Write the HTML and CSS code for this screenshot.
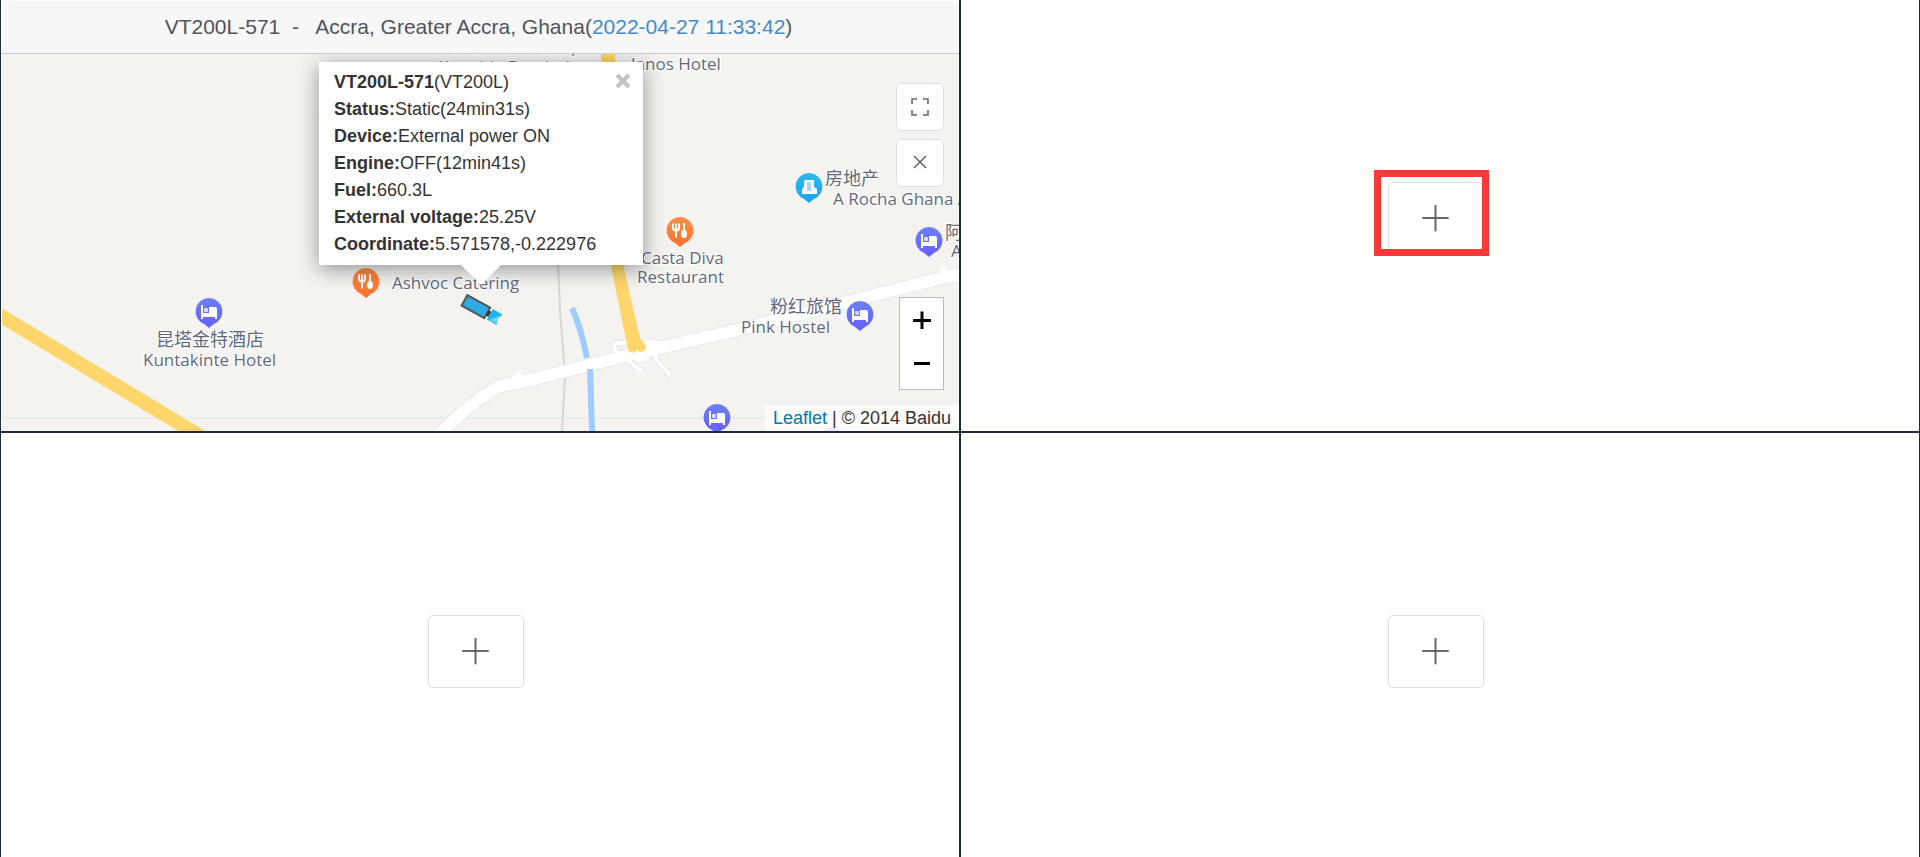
FILE: index.html
```html
<!DOCTYPE html>
<html lang="en">
<head>
    <meta charset="utf-8">
    <title>Multi Tracking</title>
    <link rel="stylesheet" href="styles.css">
</head>
<body>
    <div class="monitor-grid">
        <section class="cell cell-track">
            <header class="track-header">VT200L-571&nbsp; -&nbsp;&nbsp; Accra, Greater Accra, Ghana(<span class="time">2022-04-27 11:33:42</span>)</header>
            <div class="map">
                <svg class="map-tiles" viewBox="2 54 957 377" preserveAspectRatio="xMinYMin slice">
                    <defs>
                        <linearGradient id="hotelFill" x1="0" y1="0" x2="0" y2="1">
                            <stop offset="0" stop-color="#6c7ff8"/>
                            <stop offset="1" stop-color="#665ffa"/>
                        </linearGradient>
                        <linearGradient id="foodFill" x1="0" y1="0" x2="0" y2="1">
                            <stop offset="0" stop-color="#fb8d45"/>
                            <stop offset="1" stop-color="#fd6f2f"/>
                        </linearGradient>
                        <linearGradient id="estateFill" x1="0" y1="0" x2="0" y2="1">
                            <stop offset="0" stop-color="#2fb8e8"/>
                            <stop offset="1" stop-color="#16a6f5"/>
                        </linearGradient>
                        <path id="pin" d="M0-14a13.5 13.5 0 0 1 4.500 26.200L0 16L-4.500 12.200A13.500 13.500 0 0 1 0-14z"/>
                        <g id="hotel">
                            <use href="#pin" fill="url(#hotelFill)"/>
                            <path d="M-8-7h2v8h12v-2h2v8h-2v-2h-12v2h-2zM0-5h6q2 0 2 2v5h-8z" fill="#fff"/>
                            <rect x="-5" y="-4" width="4" height="4" rx="1" fill="#d8dcff"/>
                        </g>
                        <g id="food">
                            <use href="#pin" fill="url(#foodFill)"/>
                            <path d="M-7-7.500v4.500q0 2.500 3 2.500t3-2.500v-4.500M-4-7.500v14" fill="none" stroke="#fff" stroke-width="2"/>
                            <path d="M4-8v9" stroke="#fff" stroke-width="2"/>
                            <ellipse cx="4" cy="3" rx="3" ry="4" fill="#fff"/>
                        </g>
                        <g id="estate">
                            <use href="#pin" fill="url(#estateFill)"/>
                            <path d="M-5-6l2-1h8v7l3 2v5h-15v-5l2-2z" fill="#fff"/>
                            <path d="M-2-5h4v9h-4z" fill="#a5d6ff"/>
                        </g>
                    </defs>

                    <path d="M2 418H959" stroke="#ecebe9" stroke-width="2"/>
                    <path d="M557 240L560 310L565 375L562 431" fill="none" stroke="#d6d6d6" stroke-width="2"/>

                    <!-- roads -->
                    <g fill="none" stroke-linejoin="round" stroke-linecap="round">
                        <path d="M438 436Q465 408 484 396Q498 384 518 383L625 356L750 327L860 299L945 277L965 274" stroke="#e9e9e9" stroke-width="14"/>
                        <g stroke="#e9e9e9" stroke-width="6">
                            <path d="M618 354Q610 344 617 343H642"/>
                            <path d="M626 359L641 371M656 350V359L669 374M635 359Q642 364 650 353"/>
                        </g>
                        <path d="M438 436Q465 408 484 396Q498 384 518 383L625 356L750 327L860 299L945 277L965 274" stroke="#fff" stroke-width="12"/>
                        <g stroke="#fff" stroke-width="4">
                            <path d="M618 354Q610 344 617 343H660"/>
                            <path d="M626 359L641 371M656 350V359L669 374M635 359Q642 364 650 353"/>
                        </g>
                        <path d="M514 378l4-4l4 4M938 277l6-9l4 6" stroke="#fff" stroke-width="4"/>
                    </g>
                    <path d="M572 308Q581 328 587 358" fill="none" stroke="#9fccff" stroke-width="6"/>
                    <path d="M590 369L592 431" stroke="#9fccff" stroke-width="6"/>
                    <path d="M601 54H615L622 260L640 338L645 344A5 5 0 0 1 637 350A5 5 0 0 1 628 350L611 266z" fill="#ffd66b"/>
                    <path d="M-4 313L200 436" stroke="#ffd66b" stroke-width="14"/>

                    <!-- places -->
                    <g class="place">
                        <text x="452" y="54">Mercourt Plaza,</text>
                        <text x="438" y="73">Kwashie Bomboh</text>
                        <text x="631" y="70">Janos Hotel</text>
                        <text x="392" y="289">Ashvoc Catering</text>
                        <text x="143" y="366">Kuntakinte Hotel</text>
                        <text class="cjk" x="156" y="346">昆塔金特酒店</text>
                        <text x="641" y="264">Casta Diva</text>
                        <text x="637" y="283">Restaurant</text>
                        <text class="cjk" x="770" y="313">粉红旅馆</text>
                        <text x="741" y="333">Pink Hostel</text>
                        <text class="cjk" x="825" y="185">房地产</text>
                        <text x="833" y="205">A Rocha Ghana A</text>
                        <text class="cjk" x="945" y="239">阿</text>
                        <text x="951" y="257">A</text>
                    </g>
                    <use href="#hotel" x="209" y="312"/>
                    <use href="#hotel" x="929" y="241"/>
                    <use href="#hotel" x="860" y="315"/>
                    <use href="#hotel" x="717" y="418"/>
                    <use href="#food" x="366" y="282"/>
                    <use href="#food" x="680" y="231"/>
                    <use href="#estate" x="809" y="187"/>
                    <circle cx="832" cy="437" r="10" fill="#c9a8f8"/>

                    <!-- vehicle -->
                    <g transform="translate(482 310) rotate(29)">
                        <path d="M-20-6H6V6H-20z" fill="#2fabe4" stroke="#555" stroke-width="2"/>
                        <path d="M6-3h3v6h-3z" fill="#333"/>
                        <path d="M9-6h4l7 0l-2 6l2 6l-7 0h-4z" fill="#22b4ef"/>
                        <path d="M11 5L20-5l-2 5l2 5z" fill="#6fd3fa"/>
                    </g>
                </svg>

                <div class="popup">
                    <button type="button" class="popup-close" aria-label="Close popup">
                        <svg width="16" height="16" viewBox="0 0 16 16"><path d="M2 2L14 14M14 2L2 14" stroke="#c3c3c3" stroke-width="4"/></svg>
                    </button>
                    <div><b>VT200L-571</b>(VT200L)</div>
                    <div><b>Status:</b>Static(24min31s)</div>
                    <div><b>Device:</b>External power ON</div>
                    <div><b>Engine:</b>OFF(12min41s)</div>
                    <div><b>Fuel:</b>660.3L</div>
                    <div><b>External voltage:</b>25.25V</div>
                    <div><b>Coordinate:</b>5.571578,-0.222976</div>
                    <div class="popup-tip"></div>
                </div>

                <div class="map-tools">
                    <button type="button" class="tool-btn" aria-label="Full screen">
                        <svg width="18" height="18" viewBox="0 0 18 18"><path d="M1 6V1H6M12 1H17V6M17 12V17H12M6 17H1V12" fill="none" stroke="#606266" stroke-width="1.500"/></svg>
                    </button>
                    <button type="button" class="tool-btn" aria-label="Remove">
                        <svg width="14" height="14" viewBox="0 0 14 14"><path d="M1 0L13 12M13 0L1 12" stroke="#606266" stroke-width="1.500"/></svg>
                    </button>
                </div>

                <div class="map-zoom">
                    <button type="button" aria-label="Zoom in">
                        <svg width="18" height="18" viewBox="0 0 18 18"><path d="M0 9.500H18M9 0.500V18" stroke="#000" stroke-width="3"/></svg>
                    </button>
                    <button type="button" aria-label="Zoom out">
                        <svg width="18" height="18" viewBox="0 0 18 18"><path d="M1 9.500H17" stroke="#000" stroke-width="3"/></svg>
                    </button>
                </div>

                <div class="attribution"><a href="#">Leaflet</a> | © 2014 Baidu</div>
            </div>
        </section>

        <section class="cell cell-empty">
            <div class="add-wrap">
                <button type="button" class="add-btn" aria-label="Add device">
                    <svg width="28" height="28" viewBox="0 0 28 28"><path d="M1 13H26M13.500 0.500V25.500" stroke="#66676c" stroke-width="2" stroke-linecap="round"/></svg>
                </button>
                <div class="highlight"></div>
            </div>
        </section>

        <section class="cell cell-empty">
            <button type="button" class="add-btn" aria-label="Add device">
                <svg width="28" height="28" viewBox="0 0 28 28"><path d="M1 13H26M13.500 0.500V25.500" stroke="#66676c" stroke-width="2" stroke-linecap="round"/></svg>
            </button>
        </section>

        <section class="cell cell-empty">
            <button type="button" class="add-btn" aria-label="Add device">
                <svg width="28" height="28" viewBox="0 0 28 28"><path d="M1 13H26M13.500 0.500V25.500" stroke="#66676c" stroke-width="2" stroke-linecap="round"/></svg>
            </button>
        </section>
    </div>
</body>
</html>
```
FILE: styles.css
```css
* {
    box-sizing: border-box;
}
body {
    margin: 0;
    height: 100vh;
    overflow: hidden;
    background-color: #fff;
    font-family: "Liberation Sans", Arial, sans-serif;
    color: #333;
}
button {
    display: flex;
    align-items: center;
    justify-content: center;
    padding: 0;
    background-color: #fff;
    border: none;
    cursor: pointer;
}

.monitor-grid {
    display: grid;
    grid-template-columns: 1fr 1fr;
    grid-template-rows: 1fr 1fr;
    height: calc(100vh + 7px);
}
.cell {
    min-width: 0;
    min-height: 0;
    border: 1px solid #1c2b3d;
    border-top: none;
}
.cell:nth-child(n+3) {
    border-top: 1px solid #1c2b3d;
    border-bottom: none;
}
.cell-track {
    display: flex;
    flex-direction: column;
    padding: 1px 0 0 1px;
}
.cell-empty {
    display: flex;
    align-items: center;
    justify-content: center;
    padding: 6px 8px 0 0;
}

.track-header {
    height: 53px;
    line-height: 52px;
    padding-right: 4px;
    text-align: center;
    font-size: 21px;
    color: #50545c;
    background-color: #f7f7f8;
    border-bottom: 1px solid #c8c9cb;
}
.track-header .time {
    color: #428bca;
}

.map {
    position: relative;
    flex: 1;
    min-height: 0;
    overflow: hidden;
    background-color: #f4f3f0;
}
.map-tiles {
    display: block;
    width: 100%;
    height: 100%;
}
.place {
    font-family: "Open Sans", "Noto Sans", "Noto Sans CJK SC", sans-serif;
    font-size: 17px;
    fill: #5f687c;
    stroke: #fff;
    stroke-width: 2px;
    paint-order: stroke;
}
.place .cjk {
    font-family: "Noto Sans CJK SC", sans-serif;
    font-size: 18px;
}

.popup {
    position: absolute;
    left: 317px;
    top: 8px;
    width: 324px;
    padding: 7px 15px;
    font-size: 18px;
    line-height: 27px;
    background-color: #fff;
    box-shadow: 0 4px 20px rgba(0, 0, 0, 0.4);
}
.popup-close {
    position: absolute;
    top: 11px;
    right: 12px;
}
.popup-tip {
    position: absolute;
    top: 100%;
    left: 50%;
    margin-left: -20px;
    border: 20px solid transparent;
    border-top-color: #fff;
    border-bottom: none;
}

.map-tools {
    position: absolute;
    top: 29px;
    right: 15px;
    display: flex;
    flex-direction: column;
    gap: 8px;
}
.tool-btn {
    width: 48px;
    height: 48px;
    border: 1px solid #dcdfe6;
    border-radius: 5px;
}
.map-zoom {
    position: absolute;
    right: 15px;
    bottom: 41px;
    padding-bottom: 5px;
    background-color: #fff;
    border: 1px solid #bbb;
}
.map-zoom button {
    width: 43px;
    height: 43px;
}
.attribution {
    position: absolute;
    right: 0;
    bottom: 0;
    padding: 0 8px;
    font-size: 18px;
    line-height: 26px;
    background-color: rgba(255, 255, 255, 0.7);
}
.attribution a {
    color: #0078a8;
    text-decoration: none;
}

.add-wrap {
    position: relative;
}
.add-btn {
    width: 96px;
    height: 73px;
    border: 1px solid #dcdfe6;
    border-radius: 5px;
}
.highlight {
    position: absolute;
    top: -12px;
    left: -14px;
    width: 115px;
    height: 86px;
    border: 7px solid #fc3838;
}
```
